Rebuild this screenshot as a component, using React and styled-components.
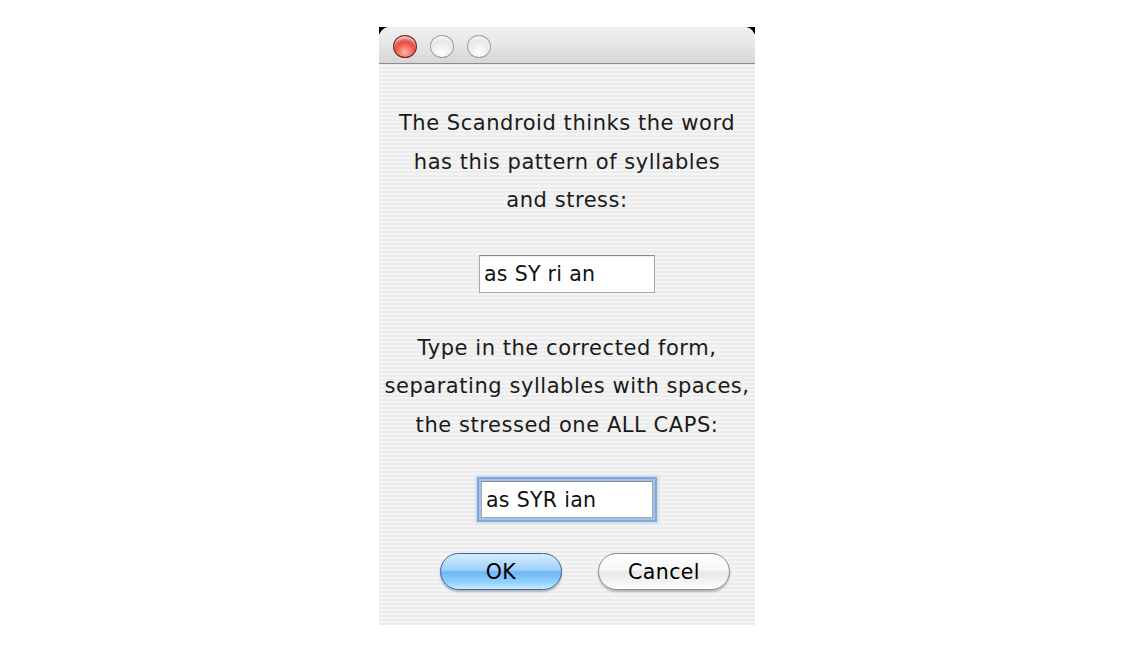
import React from 'react';
import styled, { createGlobalStyle } from 'styled-components';

const GlobalStyle = createGlobalStyle`
  html, body {
    margin: 0;
    padding: 0;
    background: #ffffff;
  }
  body {
    font-family: "DejaVu Sans", "Liberation Sans", sans-serif;
  }
`;

const Page = styled.div`
  display: flex;
  justify-content: center;
  padding-top: 27px;
`;

const Frame = styled.div`
  width: 376px;
  background: linear-gradient(#000 0 7px, transparent 7px);
`;

const Window = styled.div`
  display: flex;
  flex-direction: column;
  border-radius: 11px 11px 0 0;
  overflow: hidden;
  background-color: #efefef;
  background-image: repeating-linear-gradient(
    0deg,
    #ececec 0px,
    #ececec 2px,
    #f4f4f4 2px,
    #f4f4f4 4px
  );
`;

const TitleBar = styled.div`
  height: 37px;
  box-sizing: border-box;
  padding: 3px 0 0 14px;
  display: flex;
  align-items: center;
  gap: 13px;
  background: linear-gradient(#f0f0f0, #e6e6e6 50%, #d6d6d6);
  border-bottom: 1px solid #8c8c8c;
`;

const Light = styled.span`
  width: 24px;
  height: 23px;
  border-radius: 50%;
  box-sizing: border-box;
  border: 1.5px solid ${p => (p.$red ? '#6e241c' : '#a0a0a0')};
  background: ${p =>
    p.$red
      ? 'radial-gradient(circle at 50% 78%, #ffb8a8 0%, #f05a4a 45%, #b52219 100%)'
      : 'radial-gradient(circle at 50% 78%, #ffffff 0%, #ececec 50%, #cfcfcf 100%)'};
  box-shadow: inset 0 5px 3px -2px rgba(255, 255, 255, 0.75);
`;

const Content = styled.div`
  display: flex;
  flex-direction: column;
  align-items: center;
  padding: 40px 0 35px;
`;

const Message = styled.p`
  margin: 0;
  text-align: center;
  font-size: 21px;
  letter-spacing: 0.55px;
  line-height: 38.5px;
  color: #1a1a1a;
`;

const Field = styled.div`
  box-sizing: border-box;
  width: ${p => (p.$focused ? '172px' : '176px')};
  height: ${p => (p.$focused ? '37px' : '38px')};
  margin: ${p => (p.$focused ? '37px 0 35px' : '35px 0 36px')};
  display: flex;
  align-items: center;
  padding-left: 4px;
  background: #fff;
  border: 1px solid #a8a8a8;
  border-top-color: #8a8a8a;
  font-size: 20.5px;
  letter-spacing: 0.3px;
  color: #111;
  box-shadow: ${p =>
    p.$focused
      ? '0 0 0 2px #a3c2e8, 0 0 0 4px #80a8d8, 0 0 3px 5px rgba(128, 168, 216, 0.45)'
      : 'inset 0 1px 1px rgba(0, 0, 0, 0.08)'};
`;

const Buttons = styled.div`
  align-self: stretch;
  display: flex;
  justify-content: flex-end;
  gap: 36px;
  padding-right: 25px;
`;

const Button = styled.div`
  box-sizing: border-box;
  width: ${p => p.$w}px;
  height: 37px;
  border-radius: 19px;
  display: flex;
  align-items: center;
  justify-content: center;
  font-size: 20.5px;
  letter-spacing: 0.4px;
  color: #000;
  border: 1px solid ${p => (p.$primary ? '#3f5fa8' : '#8a8a8a')};
  background: ${p =>
    p.$primary
      ? 'linear-gradient(#d6ecff 0%, #9fd0fb 45%, #6fb5f3 52%, #8fd0ff 80%, #c8ecff 100%)'
      : 'linear-gradient(#ffffff 0%, #f6f6f6 45%, #e8e8e8 52%, #f4f4f4 80%, #ffffff 100%)'};
  box-shadow: 0 2px 2px rgba(0, 0, 0, 0.25);
`;

export default function App() {
  return (
    <>
      <GlobalStyle />
      <Page>
        <Frame>
          <Window>
            <TitleBar>
              <Light $red />
              <Light />
              <Light />
            </TitleBar>
            <Content>
              <Message>
                The Scandroid thinks the word
                <br />
                has this pattern of syllables
                <br />
                and stress:
              </Message>
              <Field>as SY ri an</Field>
              <Message>
                Type in the corrected form,
                <br />
                separating syllables with spaces,
                <br />
                the stressed one ALL CAPS:
              </Message>
              <Field $focused>as SYR ian</Field>
              <Buttons>
                <Button $primary $w={122}>OK</Button>
                <Button $w={132}>Cancel</Button>
              </Buttons>
            </Content>
          </Window>
        </Frame>
      </Page>
    </>
  );
}
